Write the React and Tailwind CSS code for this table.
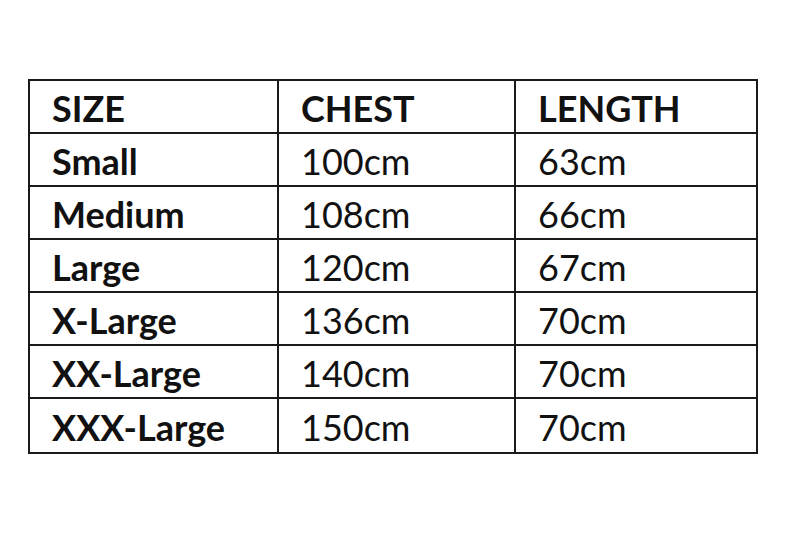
import React from "react";

const rows = [
  ["Small", "100cm", "63cm"],
  ["Medium", "108cm", "66cm"],
  ["Large", "120cm", "67cm"],
  ["X-Large", "136cm", "70cm"],
  ["XX-Large", "140cm", "70cm"],
  ["XXX-Large", "150cm", "70cm"],
];

function Row({ cells, header, last }) {
  return (
    <div
      className={
        "grid grid-cols-[249px_237px_1fr] h-[53px] " +
        (last ? "" : "border-b-2 border-[#1a1a1a]")
      }
    >
      {cells.map((c, i) => (
        <div
          key={i}
          className={
            "flex items-center pt-[2px] " +
            (i === 0 ? "pl-[22px] " : "pl-[22px] ") +
            (i < 2 ? "border-r-2 border-[#1a1a1a] " : "") +
            (header || i === 0 ? "font-bold" : "font-normal")
          }
        >
          {c}
        </div>
      ))}
    </div>
  );
}

export default function App() {
  return (
    <div
      className="w-[794px] h-[536px] bg-white pt-[79px] pl-[28px] text-[#111] text-[36px] leading-none"
      style={{ fontFamily: "Lato, 'Liberation Sans', sans-serif" }}
    >
      <div className="w-[730px] border-2 border-[#1a1a1a]">
        <Row cells={["SIZE", "CHEST", "LENGTH"]} header />
        {rows.map((r, i) => (
          <Row key={i} cells={r} last={i === rows.length - 1} />
        ))}
      </div>
    </div>
  );
}
